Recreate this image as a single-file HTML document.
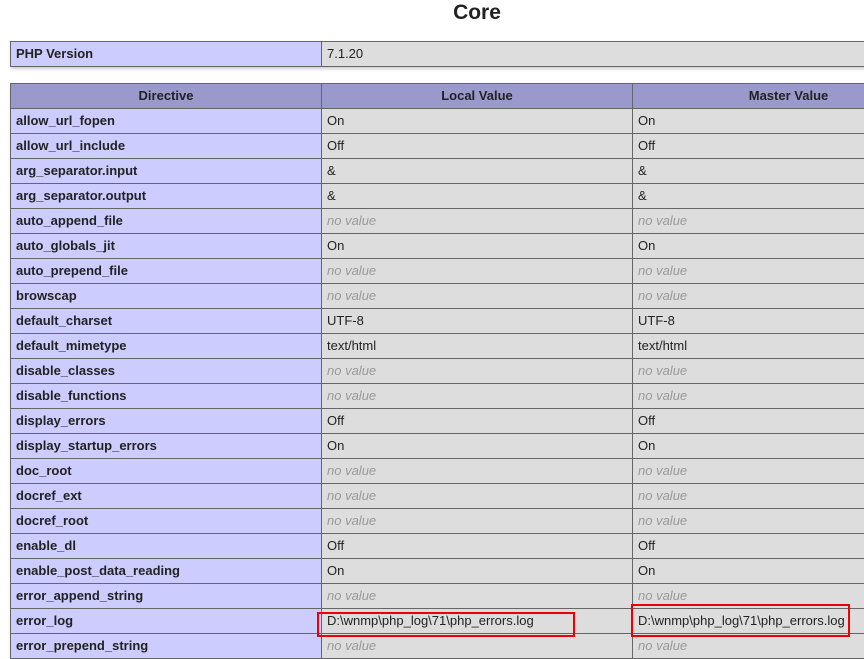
<!DOCTYPE html>
<html><head><meta charset="utf-8"><style>
body{margin:0;background:#fff;width:864px;height:655px;overflow:hidden;position:relative;font-family:"Liberation Sans","Noto Sans CJK SC",sans-serif;font-size:13px;color:#222}
h2{position:absolute;left:0;width:954px;top:0;margin:0;text-align:center;font-size:21px;line-height:25px;font-weight:bold;color:#222}
table{position:absolute;left:10px;border-collapse:collapse;table-layout:fixed;width:934px;box-shadow:1px 2px 3px #ccc}
td,th{border:1px solid #666;height:24px;padding:0 5px;vertical-align:middle;white-space:nowrap;overflow:hidden;line-height:22px}
td.e{background:#ccf;font-weight:bold;color:#222}
td.v{background:#ddd;color:#222}
th{background:#99c;font-weight:bold;text-align:center;color:#222}
i{color:#999}
.box{position:absolute;border:2px solid #e00;box-sizing:border-box}
</style></head><body>
<h2>Core</h2>
<table style="top:41px"><col style="width:311px"><col style="width:623px">
<tr><td class="e">PHP Version</td><td class="v">7.1.20</td></tr></table>
<table style="top:83px"><col style="width:311px"><col style="width:311px"><col style="width:312px">
<tr><th>Directive</th><th>Local Value</th><th>Master Value</th></tr>
<tr><td class="e">allow_url_fopen</td><td class="v">On</td><td class="v">On</td></tr>
<tr><td class="e">allow_url_include</td><td class="v">Off</td><td class="v">Off</td></tr>
<tr><td class="e">arg_separator.input</td><td class="v">&amp;</td><td class="v">&amp;</td></tr>
<tr><td class="e">arg_separator.output</td><td class="v">&amp;</td><td class="v">&amp;</td></tr>
<tr><td class="e">auto_append_file</td><td class="v"><i>no value</i></td><td class="v"><i>no value</i></td></tr>
<tr><td class="e">auto_globals_jit</td><td class="v">On</td><td class="v">On</td></tr>
<tr><td class="e">auto_prepend_file</td><td class="v"><i>no value</i></td><td class="v"><i>no value</i></td></tr>
<tr><td class="e">browscap</td><td class="v"><i>no value</i></td><td class="v"><i>no value</i></td></tr>
<tr><td class="e">default_charset</td><td class="v">UTF-8</td><td class="v">UTF-8</td></tr>
<tr><td class="e">default_mimetype</td><td class="v">text/html</td><td class="v">text/html</td></tr>
<tr><td class="e">disable_classes</td><td class="v"><i>no value</i></td><td class="v"><i>no value</i></td></tr>
<tr><td class="e">disable_functions</td><td class="v"><i>no value</i></td><td class="v"><i>no value</i></td></tr>
<tr><td class="e">display_errors</td><td class="v">Off</td><td class="v">Off</td></tr>
<tr><td class="e">display_startup_errors</td><td class="v">On</td><td class="v">On</td></tr>
<tr><td class="e">doc_root</td><td class="v"><i>no value</i></td><td class="v"><i>no value</i></td></tr>
<tr><td class="e">docref_ext</td><td class="v"><i>no value</i></td><td class="v"><i>no value</i></td></tr>
<tr><td class="e">docref_root</td><td class="v"><i>no value</i></td><td class="v"><i>no value</i></td></tr>
<tr><td class="e">enable_dl</td><td class="v">Off</td><td class="v">Off</td></tr>
<tr><td class="e">enable_post_data_reading</td><td class="v">On</td><td class="v">On</td></tr>
<tr><td class="e">error_append_string</td><td class="v"><i>no value</i></td><td class="v"><i>no value</i></td></tr>
<tr><td class="e">error_log</td><td class="v">D:\wnmp\php_log\71\php_errors.log</td><td class="v">D:\wnmp\php_log\71\php_errors.log</td></tr>
<tr><td class="e">error_prepend_string</td><td class="v"><i>no value</i></td><td class="v"><i>no value</i></td></tr>
</table>
<div class="box" style="left:317px;top:612px;width:258px;height:25px"></div>
<div class="box" style="left:631px;top:604px;width:219px;height:33px"></div>
</body></html>
